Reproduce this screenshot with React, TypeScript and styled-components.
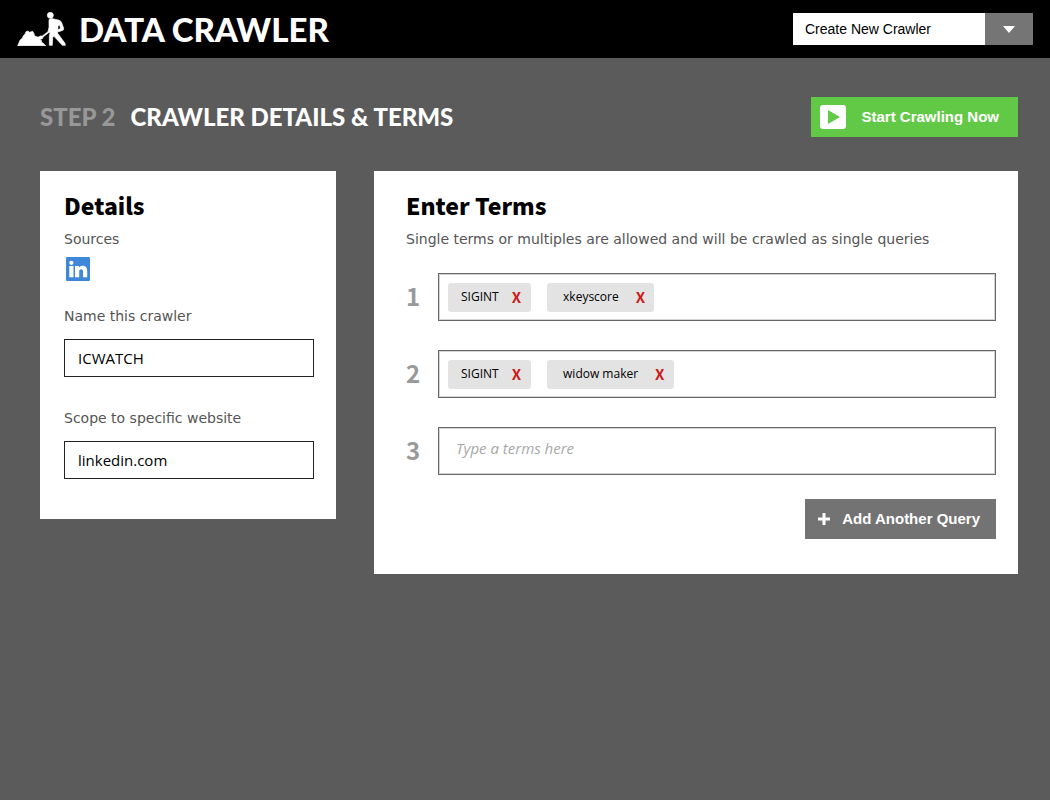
import React, { useState } from "react";
import styled, { createGlobalStyle } from "styled-components";

const GlobalStyle = createGlobalStyle`
  *, *::before, *::after { box-sizing: border-box; }
  body { margin: 0; background: #5b5b5b; color: #000; }
  button, input, select { font: inherit; }
`;

const ui = `"Liberation Sans", Arial, sans-serif`;
const label = `"DejaVu Sans", Verdana, sans-serif`;
const humanist = `"Open Sans", "Noto Sans", sans-serif`;
const heading = `"Noto Sans CJK SC", "Noto Sans", sans-serif`;
const display = `Lato, "Open Sans", sans-serif`;

const Header = styled.header`
  display: flex;
  align-items: center;
  justify-content: space-between;
  height: 58px;
  padding: 0 17px;
  background: #000;
`;

const Brand = styled.a`
  display: flex;
  align-items: center;
  gap: 13px;
  color: #fff;
  font: 900 33px/58px ${display};
  text-decoration: none;
  white-space: nowrap;
`;

const Picker = styled.div`
  position: relative;
  width: 240px;
  height: 32px;
`;

const PickerSelect = styled.select`
  appearance: none;
  width: 100%;
  height: 100%;
  padding: 0 60px 0 12px;
  border: 0;
  border-radius: 0;
  background: #fff;
  color: #000;
  font: 14px/32px ${ui};
`;

const PickerArrow = styled.span`
  position: absolute;
  top: 0;
  right: 0;
  display: flex;
  align-items: center;
  justify-content: center;
  width: 48px;
  height: 32px;
  background: #757575;
  pointer-events: none;
`;

const Main = styled.main`
  padding: 39px 32px 40px 40px;
`;

const TitleBar = styled.div`
  display: flex;
  align-items: center;
  justify-content: space-between;
  margin-bottom: 34px;
`;

const Title = styled.h1`
  margin: 0;
  color: #fff;
  font: 900 24px/40px ${display};
`;

const Step = styled.span`
  margin-right: 15px;
  color: #989898;
`;

const ActionButton = styled.button<{ $tone: "go" | "neutral" }>`
  display: flex;
  align-items: center;
  gap: ${(p) => (p.$tone === "go" ? 15 : 12)}px;
  height: 40px;
  padding: ${(p) => (p.$tone === "go" ? "0 19px 0 9px" : "0 16px 0 13px")};
  border: 0;
  background: ${(p) => (p.$tone === "go" ? "#62c946" : "#737373")};
  color: #fff;
  font: bold 15px/40px ${ui};
  white-space: nowrap;
  cursor: pointer;
`;

const Columns = styled.div`
  display: grid;
  grid-template-columns: 296px minmax(0, 1fr);
  align-items: start;
  gap: 38px;
`;

const Panel = styled.section<{ $wide?: boolean }>`
  padding: ${(p) => (p.$wide ? "16px 22px 35px 32px" : "16px 22px 40px 24px")};
  background: #fff;
`;

const PanelTitle = styled.h2`
  margin: 0 0 2px;
  font: 900 23px/36px ${heading};
`;

const Caption = styled.p`
  margin: 0;
  color: #555;
  font: 14px/28px ${label};
`;

const SourceList = styled.div`
  display: flex;
  padding: 4px 2px;
`;

const Field = styled.div`
  display: flex;
  flex-direction: column;
  gap: 8px;
  margin-top: 16px;

  & + & {
    margin-top: 26px;
  }
`;

const FieldLabel = styled.label`
  color: #555;
  font: 14px/30px ${label};
`;

const TextInput = styled.input`
  width: 100%;
  height: 38px;
  padding: 0 13px;
  border: 1px solid #222;
  border-radius: 0;
  color: #000;
  font: 15px/36px ${humanist};
`;

const QueryList = styled.ol`
  display: flex;
  flex-direction: column;
  gap: 29px;
  margin: 20px 0 24px;
  padding: 0;
  list-style: none;
`;

const QueryRow = styled.li`
  display: flex;
  align-items: flex-start;
`;

const QueryNumber = styled.label`
  flex: 0 0 32px;
  color: #999;
  font: bold 24px/46px ${heading};
`;

const QueryBox = styled.div`
  display: flex;
  flex: 1;
  align-items: center;
  gap: 16px;
  min-width: 0;
  height: 48px;
  padding: 0 9px;
  border: 1px solid #686868;
  box-shadow: inset 0 0 0 1px #d4d4d4;
`;

const QueryInput = styled.input`
  flex: 1;
  min-width: 0;
  height: 44px;
  padding: 0 8px 6px;
  border: 0;
  outline: 0;
  background: transparent;
  font: 15px/38px ${humanist};

  &::placeholder {
    color: #a8a8a8;
    font-style: italic;
    opacity: 1;
  }
`;

const Chip = styled.span<{ $roomy: boolean }>`
  display: flex;
  align-items: center;
  gap: ${(p) => (p.$roomy ? 17 : 13)}px;
  height: 29px;
  padding: ${(p) => (p.$roomy ? "0 9px 0 16px" : "0 10px 0 13px")};
  border-radius: 3px;
  background: #e3e3e3;
  font: 12px/28px ${humanist};
  white-space: nowrap;
`;

const ChipRemove = styled.button`
  padding: 0;
  border: 0;
  background: none;
  color: #cc1b1b;
  font: bold 15px/28px ${heading};
  cursor: pointer;
`;

const PanelActions = styled.div`
  display: flex;
  justify-content: flex-end;
`;

const DiggerIcon = () => (
  <svg width="49" height="34" viewBox="51 34 147 102" fill="#fff" stroke="#fff" strokeWidth="2" aria-hidden="true">
    <circle cx="151" cy="44" r="9" />
    <path d="M53 135 60 119 67 112 71 104 75 101 78 93 84 91 89 95 98 92 102 99 104 106 113 109 120 117 125 120 124 124 130 128 137 135Z" />
    <path d="M147 57Q151 53 158 54L178 59Q183 61 185 66L191 83 190 88 177 93 173 91 173 88 182 83 178 72 174 77 173 98 195 128 196 134 187 134 162 107 158 110 157 134 148 134 148 104 151 95 146 96 130 108 127 114 117 117 116 112 113 110 121 106 127 106 144 93 147 80Z" />
  </svg>
);

const PlayIcon = () => (
  <svg width="26" height="24" viewBox="0 0 26 24" aria-hidden="true">
    <rect width="26" height="24" rx="3" fill="#fff" />
    <path d="M8 5v14l12-7z" fill="#62c946" />
  </svg>
);

const PlusIcon = () => (
  <svg width="12" height="12" viewBox="0 0 12 12" aria-hidden="true">
    <path d="M6 0v12M0 6h12" stroke="#fff" strokeWidth="3" />
  </svg>
);

const LinkedInIcon = () => (
  <svg width="24" height="24" viewBox="0 0 24 24" role="img" aria-label="LinkedIn">
    <rect width="24" height="24" rx="1" fill="#3f87d9" />
    <g fill="#fff">
      <circle cx="5.4" cy="5.8" r="2.1" />
      <path d="M3.3 9h4.200v11.200H3.300zM9 9h4v1.600c.7-1.100 1.900-1.900 3.600-1.900 3.300 0 4.600 2.100 4.600 5.200v6.300h-4.200v-5.600c0-1.400-.3-2.300-1.700-2.300s-2.100.9-2.100 2.300v5.600H9z" />
    </g>
  </svg>
);

const initialQueries: string[][] = [["SIGINT", "xkeyscore"], ["SIGINT", "widow maker"], []];

export default function App() {
  const [queries, setQueries] = useState(initialQueries);

  const removeTerm = (row: number, term: number) =>
    setQueries(queries.map((q, i) => (i === row ? q.filter((_, j) => j !== term) : q)));

  return (
    <>
      <GlobalStyle />
      <Header>
        <Brand href="#">
          <DiggerIcon />
          DATA CRAWLER
        </Brand>
        <Picker>
          <PickerSelect aria-label="Crawler">
            <option>Create New Crawler</option>
          </PickerSelect>
          <PickerArrow>
            <svg width="12" height="7" viewBox="0 0 12 7" aria-hidden="true">
              <path d="M0 0h12L6 7z" fill="#fff" />
            </svg>
          </PickerArrow>
        </Picker>
      </Header>
      <Main>
        <TitleBar>
          <Title>
            <Step>STEP 2</Step>
            CRAWLER DETAILS &amp; TERMS
          </Title>
          <ActionButton type="button" $tone="go">
            <PlayIcon />
            Start Crawling Now
          </ActionButton>
        </TitleBar>
        <Columns>
          <Panel>
            <PanelTitle>Details</PanelTitle>
            <Caption>Sources</Caption>
            <SourceList>
              <LinkedInIcon />
            </SourceList>
            <Field>
              <FieldLabel htmlFor="crawler-name">Name this crawler</FieldLabel>
              <TextInput id="crawler-name" defaultValue="ICWATCH" />
            </Field>
            <Field>
              <FieldLabel htmlFor="crawler-scope">Scope to specific website</FieldLabel>
              <TextInput id="crawler-scope" defaultValue="linkedin.com" />
            </Field>
          </Panel>
          <Panel $wide>
            <PanelTitle>Enter Terms</PanelTitle>
            <Caption>Single terms or multiples are allowed and will be crawled as single queries</Caption>
            <QueryList>
              {queries.map((terms, row) => (
                <QueryRow key={row}>
                  <QueryNumber htmlFor={`query-${row}`}>{row + 1}</QueryNumber>
                  <QueryBox>
                    {terms.map((term, i) => (
                      <Chip key={term} $roomy={i > 0}>
                        {term}
                        <ChipRemove type="button" onClick={() => removeTerm(row, i)}>
                          X
                        </ChipRemove>
                      </Chip>
                    ))}
                    <QueryInput
                      id={`query-${row}`}
                      placeholder={terms.length ? undefined : "Type a terms here"}
                    />
                  </QueryBox>
                </QueryRow>
              ))}
            </QueryList>
            <PanelActions>
              <ActionButton type="button" $tone="neutral" onClick={() => setQueries([...queries, []])}>
                <PlusIcon />
                Add Another Query
              </ActionButton>
            </PanelActions>
          </Panel>
        </Columns>
      </Main>
    </>
  );
}
